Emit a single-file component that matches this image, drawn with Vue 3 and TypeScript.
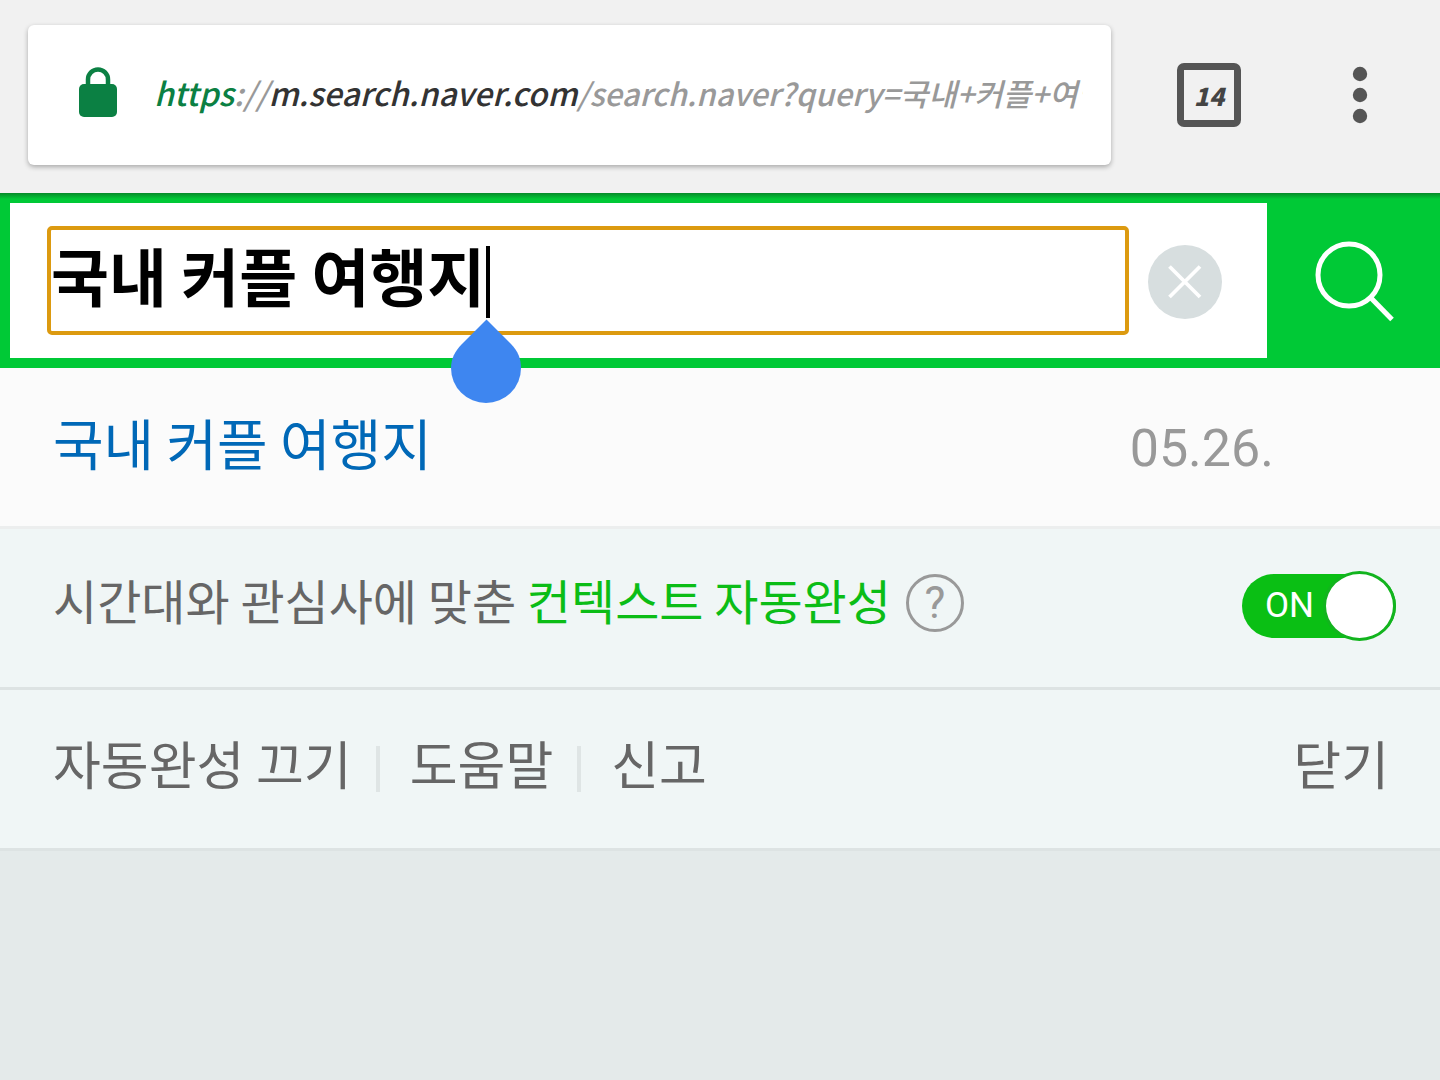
<script setup lang="ts">
import { ref } from 'vue'

const query = ref('국내 커플 여행지')
const contextual = ref(true)
const tabCount = 14
const suggestions = [{ text: '국내 커플 여행지', date: '05.26.' }]
const links = ['자동완성 끄기', '도움말', '신고']
</script>

<template>
  <div class="page">
    <header class="toolbar">
      <div class="address">
        <svg class="lock" width="40" height="52" viewBox="0 0 40 52" aria-hidden="true">
          <path d="M10 20v-6.500a10 10 0 0 1 20 0V20" fill="none" stroke="#0b8043" stroke-width="4.500" />
          <rect x="1" y="18" width="38" height="33" rx="5" fill="#0b8043" />
        </svg>
        <div class="url" role="textbox" aria-label="주소"><span class="scheme">https</span>://<span class="host">m.search.naver.com</span><span class="path">/search.naver?query=국내+커플+여행지</span></div>
      </div>
      <button class="tabs" type="button" aria-label="탭">{{ tabCount }}</button>
      <button class="menu" type="button" aria-label="메뉴">
        <svg width="16" height="58" viewBox="0 0 16 58" fill="#555">
          <circle cx="8" cy="8" r="7.200" />
          <circle cx="8" cy="29" r="7.200" />
          <circle cx="8" cy="50" r="7.200" />
        </svg>
      </button>
    </header>

    <form class="search" role="search" @submit.prevent>
      <div class="field">
        <div class="entry">
          <input v-model="query" type="text" aria-label="검색어" />
          <span class="caret"></span>
          <svg class="handle" width="70" height="84" viewBox="0 0 70 84" aria-hidden="true">
            <path d="M35.500 0.500 L60 25 C67 32 70 40 70 49 A35 35 0 0 1 0 49 C0 40 4 32 10.500 25.500 Z" fill="#3e86f0" />
          </svg>
        </div>
        <button class="clear" type="button" aria-label="지우기" @click="query = ''">
          <svg width="74" height="74" viewBox="0 0 74 74">
            <circle cx="37" cy="37" r="37" fill="#d7dedf" />
            <path d="M21.500 21.500 L52 52 M52 21.500 L21.500 52" stroke="#fff" stroke-width="3.800" />
          </svg>
        </button>
      </div>
      <button class="submit" type="submit" aria-label="검색">
        <svg width="82" height="82" viewBox="0 0 82 82" fill="none" stroke="#fff" stroke-width="5">
          <circle cx="36" cy="35" r="31" />
          <path d="M57.500 57.500 L79 79.500" />
        </svg>
      </button>
    </form>

    <ul class="suggestions">
      <li v-for="item in suggestions" :key="item.text" class="row suggestion">
        <a href="#">{{ item.text }}</a>
        <span class="date">{{ item.date }}</span>
      </li>
    </ul>

    <div class="row context">
      <p>시간대와 관심사에 맞춘 <a href="#">컨텍스트 자동완성</a></p>
      <button class="help" type="button" aria-label="도움말">?</button>
      <label class="toggle">
        <input v-model="contextual" type="checkbox" aria-label="컨텍스트 자동완성" />
        <span class="state">{{ contextual ? 'ON' : 'OFF' }}</span>
        <span class="knob"></span>
      </label>
    </div>

    <div class="row footer">
      <nav>
        <a v-for="link in links" :key="link" href="#"><span>{{ link }}</span></a>
      </nav>
      <button class="close" type="button">닫기</button>
    </div>
  </div>
</template>

<style>
body {
  margin: 0;
  background: #e4eaea;
}
</style>

<style scoped>
* {
  box-sizing: border-box;
}
.page {
  font-family: "Noto Sans CJK KR", "Noto Sans", sans-serif;
  color: #666;
}
a {
  color: inherit;
  text-decoration: none;
}
button {
  padding: 0;
  border: 0;
  background: none;
  color: inherit;
  font-family: inherit;
}
svg {
  display: block;
}
.toolbar {
  display: flex;
  align-items: center;
  padding: 25px 72px 28px 28px;
  background: #f1f1f1;
}
.address {
  flex: 1;
  min-width: 0;
  display: flex;
  align-items: center;
  height: 140px;
  padding: 0 28px 6px 50px;
  border-radius: 6px;
  background: #fff;
  box-shadow: 0 2px 5px rgba(0, 0, 0, 0.3);
}
.lock {
  flex: none;
  margin-right: 36px;
}
.url {
  flex: 1;
  overflow: hidden;
  white-space: nowrap;
  font-size: 32px;
  font-weight: 500;
  font-style: italic;
  line-height: 48px;
  color: #999;
}
.scheme {
  color: #0b8043;
}
.host {
  color: #333;
}
.path {
  font-size: 31px;
}
.tabs {
  width: 64px;
  height: 64px;
  margin-left: 66px;
  border: 7px solid #555;
  border-radius: 7px;
  color: #444;
  font-size: 25px;
  font-weight: 900;
  font-style: italic;
  line-height: 44px;
}
.menu {
  margin-left: 111px;
}
.search {
  display: flex;
  padding: 10px 0 10px 10px;
  background: linear-gradient(#068a29, #00c936 6px);
}
.field {
  flex: 1;
  min-width: 0;
  display: flex;
  align-items: center;
  height: 155px;
  padding: 0 45px 0 37px;
  background: #fff;
}
.entry {
  position: relative;
  flex: 1;
  min-width: 0;
  margin-right: 19px;
}
.entry input {
  display: block;
  width: 100%;
  height: 109px;
  padding: 0 0 15px;
  border: 4px solid #dc9a10;
  border-radius: 5px;
  outline: 0;
  background: #fff;
  color: #000;
  font-family: inherit;
  font-size: 63px;
  font-weight: 700;
}
.caret {
  position: absolute;
  left: 439px;
  top: 20px;
  width: 4px;
  height: 72px;
  background: #000;
}
.handle {
  position: absolute;
  left: 404px;
  top: 93px;
}
.clear {
  margin-top: 2px;
}
.submit {
  width: 173px;
  display: flex;
  align-items: center;
  justify-content: center;
}
.suggestions {
  margin: 0;
  padding: 0;
  list-style: none;
}
.row {
  display: flex;
  align-items: center;
  height: 161px;
  padding: 0 44px 0 53px;
  border-bottom: 3px solid #dde3e3;
  background: #f0f6f6;
}
.suggestion {
  padding-right: 166px;
  justify-content: space-between;
  border-bottom-color: #eceeee;
  background: #fbfbfb;
}
.suggestion a {
  padding-bottom: 12px;
  color: #0068b7;
  font-size: 55px;
}
.date {
  padding-top: 2px;
  color: #999;
  font-family: Roboto, sans-serif;
  font-size: 52px;
}
.context {
  padding-bottom: 4px;
}
.context p {
  margin: 0;
  padding-bottom: 14px;
  font-size: 48px;
}
.context a {
  color: #0bbd16;
}
.help {
  width: 58px;
  height: 58px;
  margin: 0 0 6px 15px;
  border: 3px solid #999;
  border-radius: 50%;
  color: #999;
  font-family: Roboto, sans-serif;
  font-size: 44px;
  line-height: 52px;
}
.toggle {
  position: relative;
  display: flex;
  align-items: center;
  width: 154px;
  height: 64px;
  margin-left: auto;
  padding: 0 0 2px 23px;
  border-radius: 32px;
  background: #0abf14;
  color: #fff;
  font-family: Roboto, sans-serif;
  font-size: 35px;
}
.toggle input {
  position: absolute;
  inset: 0;
  width: 100%;
  height: 100%;
  margin: 0;
  opacity: 0;
}
.knob {
  position: absolute;
  right: 0;
  top: -3px;
  width: 73px;
  height: 70px;
  border: 3px solid #12b41e;
  border-radius: 50%;
  background: #fff;
}
.footer {
  justify-content: space-between;
  padding-right: 51px;
}
nav {
  display: flex;
  align-items: center;
}
nav a {
  display: flex;
  align-items: center;
  font-size: 52px;
}
nav a span,
.close {
  padding-bottom: 14px;
}
nav a + a::before {
  content: "";
  width: 4px;
  height: 46px;
  margin: 0 30px 0 24px;
  background: #dfe5e5;
}
.close {
  font-size: 52px;
}
</style>
